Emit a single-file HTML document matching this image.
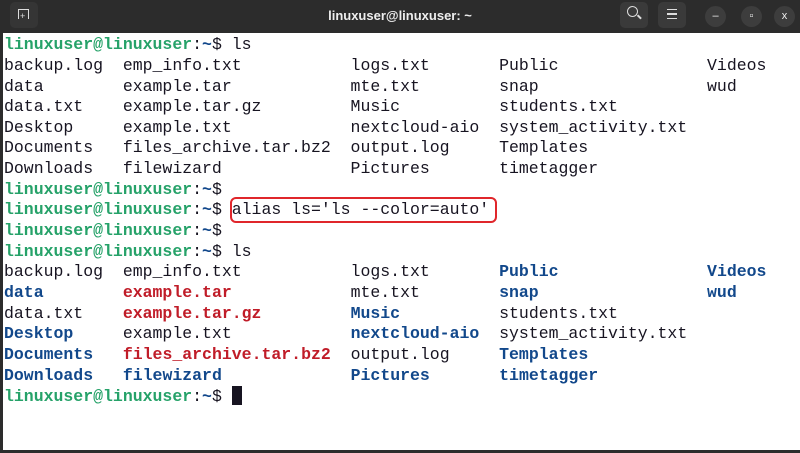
<!DOCTYPE html><html><head><style>
body{margin:0;width:800px;height:453px;background:#2c2c2c;overflow:hidden;position:relative;font-family:"Liberation Sans",sans-serif}
.tb{position:absolute;left:0;top:0;width:800px;height:33px;background:#2c2c2c;color:#eee}
.title{position:absolute;left:0;width:800px;text-align:center;top:8px;font-size:13px;font-weight:bold}
.btn{position:absolute;top:2px;width:28px;height:26px;border-radius:5px;background:#3a3a3a}
.cir{position:absolute;top:6px;width:21px;height:21px;border-radius:50%;background:#3d3d3d;color:#eee;font-size:11px;text-align:center;line-height:21px}
.term{position:absolute;left:3px;top:33px;width:797px;height:417px;background:#fff}
pre{margin:0;position:absolute;left:1px;top:2.2px;font-family:"Liberation Mono",monospace;font-size:16.5px;line-height:20.65px;color:#171421;letter-spacing:0}
.g{color:#26a269;font-weight:bold}.b{color:#12488b;font-weight:bold}.r{color:#c01c28;font-weight:bold}
.box{position:absolute;left:227px;top:164px;width:267px;height:26px;border:2px solid #e0262b;border-radius:6px;box-sizing:border-box}
.cur{display:inline-block;width:10px;height:19px;background:#171421;vertical-align:-4px}
</style></head><body>
<div class="tb">
<div class="btn" style="left:10px;background:#353535"></div>
<div style="position:absolute;left:18px;top:9px;width:9px;height:9px;border:1px solid #ddd;border-bottom:none"></div>
<div style="position:absolute;left:20px;top:11px;color:#ddd;font-size:9px">+</div>
<div class="title">linuxuser@linuxuser: ~</div>
<div class="btn" style="left:620px"></div><div style="position:absolute;left:627px;top:6px;width:9px;height:9px;border:1.5px solid #ddd;border-radius:50%"></div><div style="position:absolute;left:637px;top:16px;width:5px;height:1.5px;background:#ddd;transform:rotate(45deg)"></div>
<div class="btn" style="left:658px"></div><div style="position:absolute;left:667px;top:9px;width:10px;height:8px;border-top:1.5px solid #ddd;border-bottom:1.5px solid #ddd"></div><div style="position:absolute;left:667px;top:13px;width:10px;height:1.5px;background:#ddd"></div>
<div class="cir" style="left:705px">–</div><div class="cir" style="left:741px">▫</div><div class="cir" style="left:774px">x</div>
</div>
<div class="term"><pre><span class="g">linuxuser@linuxuser</span>:<span class="b">~</span>$ ls
backup.log  emp_info.txt           logs.txt       Public               Videos
data        example.tar            mte.txt        snap                 wud
data.txt    example.tar.gz         Music          students.txt
Desktop     example.txt            nextcloud-aio  system_activity.txt
Documents   files_archive.tar.bz2  output.log     Templates
Downloads   filewizard             Pictures       timetagger
<span class="g">linuxuser@linuxuser</span>:<span class="b">~</span>$
<span class="g">linuxuser@linuxuser</span>:<span class="b">~</span>$ alias ls='ls --color=auto'
<span class="g">linuxuser@linuxuser</span>:<span class="b">~</span>$
<span class="g">linuxuser@linuxuser</span>:<span class="b">~</span>$ ls
backup.log  emp_info.txt           logs.txt       <span class="b">Public</span>               <span class="b">Videos</span>
<span class="b">data</span>        <span class="r">example.tar</span>            mte.txt        <span class="b">snap</span>                 <span class="b">wud</span>
data.txt    <span class="r">example.tar.gz</span>         <span class="b">Music</span>          students.txt
<span class="b">Desktop</span>     example.txt            <span class="b">nextcloud-aio</span>  system_activity.txt
<span class="b">Documents</span>   <span class="r">files_archive.tar.bz2</span>  output.log     <span class="b">Templates</span>
<span class="b">Downloads</span>   <span class="b">filewizard</span>             <span class="b">Pictures</span>       <span class="b">timetagger</span>
<span class="g">linuxuser@linuxuser</span>:<span class="b">~</span>$ <span class="cur"></span></pre>
<div class="box"></div></div>
</body></html>
